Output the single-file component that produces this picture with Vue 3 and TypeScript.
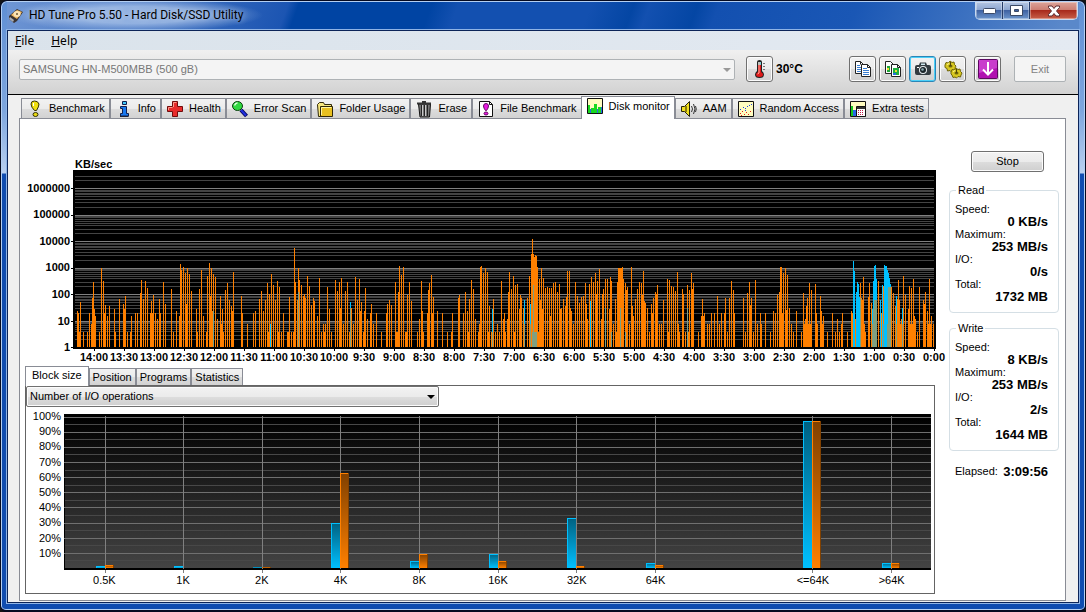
<script setup lang="ts">
import { ref } from 'vue'

interface Segment {
  offset: number
  write: string
  read: string
  both: string
}

interface Bar {
  x: number
  h: number
}

// Samples are "column:height" pairs, relative to the segment's first column.
const segments: Segment[] = [
  {
    offset: -53,
    write:
      '57:36 58:34 59:15 60:45 63:15 67:15 69:34 71:23 72:49 73:65 74:38 75:31 79:15 81:79 83:66 84:34 85:42 87:31 89:41 94:38 95:15 99:48 103:43 104:38 105:51 107:15 110:15 111:31 115:34 117:34 120:54 121:67 123:48 125:66 127:59 130:34 131:46 132:34 133:52 135:34 137:28 139:48 140:34 143:65 145:43 151:58 153:15 156:36 159:31 160:83 161:77 163:80 165:74 166:43 167:79 169:73 171:56 176:38 177:15 179:58 181:77 183:31 186:15 187:71 189:84 190:51 191:79 192:36 193:73 195:70 197:28 200:51 201:23 202:38 203:15 205:57 207:64 209:47 211:41 212:36 213:75 221:51 222:34 227:23 233:34 235:36 239:48 241:56 243:36 245:47 247:64 248:15 249:53 251:73 253:62 255:47 257:66 258:15 259:60 261:15 263:34 267:15 268:15 269:50 271:15 273:15 274:99 275:65 277:47 278:79 279:67 281:62 283:51 284:53 285:49 287:71 289:61 291:42 293:49 294:46 297:31 299:69',
    read: '250:23',
    both: '193:36 278:55',
  },
  {
    offset: 247,
    write:
      '1:15 3:23 4:15 5:23 7:60 9:38 11:15 15:67 17:56 19:65 20:39 21:69 23:23 25:56 27:65 29:15 31:39 33:23 35:70 37:47 39:68 40:36 41:45 43:15 44:36 45:59 47:28 50:34 51:43 53:23 56:34 61:15 66:34 67:43 69:47 71:42 75:65 76:15 77:15 78:55 79:81 81:72 83:80 85:15 86:15 87:52 89:65 91:46 97:15 99:28 101:66 102:36 103:15 107:34 108:57 109:64 111:72 112:34 113:50 117:36 122:34 127:15 131:15 132:34 138:49 139:52 143:34 145:55 147:36 148:15 149:48 151:67 153:58 155:28 158:15 159:23 160:80 161:81 163:74 165:79 167:75 168:15 169:41 171:15 173:48 175:15 177:23 179:15 181:66 183:28 184:34 185:15 187:28 188:55 189:75 191:58 193:71 194:15 195:62 197:63 199:38 200:52 201:49 203:39 207:49 209:71 211:93 212:108 213:93 214:90 215:92 216:91 217:80 218:15 219:68 220:47 221:79 222:38 223:69 225:59 227:60 229:59 230:31 231:59 233:64 235:65 237:55 239:63 240:38 241:39 243:48 245:41 246:50 247:76 249:76 250:39 251:36 253:23 255:65 257:51 259:44 261:50 263:51 265:64 266:43 267:28 269:63 271:70 273:65 275:74 276:53 277:66 279:78 281:28 282:53 283:58 285:68 287:68 289:38 290:70 291:66 293:23 295:48 296:15 297:65 298:79 299:79',
    read: '30:45 172:38 204:47 210:43 270:46',
    both: '30:39 172:15 204:23 210:23 212:15 213:62 214:15 215:15 216:15 285:39 291:15',
  },
  {
    offset: 547,
    write:
      '0:79 1:79 2:80 3:68 5:64 6:57 7:60 9:23 11:80 12:41 13:31 15:48 17:58 19:65 21:64 22:52 23:76 24:46 25:44 27:39 29:15 31:43 32:34 33:49 35:55 36:53 37:62 39:23 41:23 43:47 47:68 48:15 49:67 51:61 53:60 55:56 57:75 58:23 59:15 62:58 63:53 65:15 67:62 68:15 69:57 71:74 72:58 73:64 78:15 81:31 82:48 83:31 84:34 87:23 89:23 91:34 94:34 97:51 99:23 101:34 104:34 105:49 107:15 109:49 111:66 113:57 114:34 123:49 125:15 127:54 129:65 130:42 131:49 133:15 135:67 137:23 140:34 141:23 145:34 150:15 153:36 155:34 157:52 159:55 160:80 161:80 162:34 163:74 165:79 166:37 167:72 169:39 171:23 173:15 176:36 181:15 183:54 184:23 185:28 186:41 187:49 188:23 189:64 190:23 191:57 195:63 196:34 197:23 200:51 201:36 202:23 203:31 207:15 212:34 215:15 217:28 219:15 221:23 222:34 227:15 231:36 232:34 235:28 240:64 241:49 242:47 243:70 244:23 245:15 248:50 249:64 251:44 258:66 261:34 263:61 271:60 273:54 275:41 277:48 278:67 279:47 280:23 281:28 283:71 285:52 288:38 289:61 290:23 291:59 292:23 293:68 294:31 295:28 297:15 299:60 303:47 304:43 305:55 307:36 308:23 309:68 310:23 311:31 313:23',
    read: '233:86 234:76 236:55 237:65 238:63 239:50 252:38 253:66 254:81 255:82 256:68 260:47 262:62 264:82 265:81 266:81 267:77 268:74 269:69 270:63 276:51 282:39',
    both: '0:39 5:15 67:39 240:49 252:23 253:38 254:47 255:47 256:47 263:23 267:23 268:60 269:60 270:60 276:23 282:23',
  },
]

function samples(kind: 'write' | 'read' | 'both'): Bar[] {
  return segments.flatMap((s) =>
    s[kind].split(' ').map((pair) => {
      const [x, h] = pair.split(':').map(Number)
      return { x: x + s.offset, h }
    }),
  )
}

const traces = [
  { name: 'write', bars: samples('write') },
  { name: 'read', bars: samples('read') },
  { name: 'both', bars: samples('both') },
]

const DECADE = 26.5
const logY = (v: number) => Math.round(177.4 - DECADE * Math.log10(v))
const minorLines: number[] = []
for (let d = 0; d < 7; d++) {
  for (let m = 2; m < 10; m++) {
    const y = logY(m * 10 ** d)
    if (y > 5) minorLines.push(y)
  }
}
const majorLines = [1, 2, 3, 4, 5, 6].map((d) => logY(10 ** d))
const speedLabels = ['1000000', '100000', '10000', '1000', '100', '10', '1']
const speedTicks = speedLabels.map((v) => logY(Number(v)))
const timeLabels = Array.from({ length: 29 }, (_, i) => {
  const half = 28 - i
  return `${Math.floor(half / 2)}:${half % 2 ? '30' : '00'}`
})

const percentLabels = [100, 90, 80, 70, 60, 50, 40, 30, 20, 10]
const percentY = (p: number) => Math.round(154 - p * 1.515)
const midLines = percentLabels.map((p) => percentY(p - 5))
const blocks = [
  { label: '0.5K', read: 2, write: 3 },
  { label: '1K', read: 2, write: 0 },
  { label: '2K', read: 1, write: 1 },
  { label: '4K', read: 45, write: 95 },
  { label: '8K', read: 7, write: 14 },
  { label: '16K', read: 14, write: 7 },
  { label: '32K', read: 50, write: 2 },
  { label: '64K', read: 5, write: 3 },
  { label: '', read: 0, write: 0 },
  { label: '<=64K', read: 147, write: 147 },
  { label: '>64K', read: 5, write: 5 },
].map((b, i) => ({ ...b, x: Math.round(40.6 + i * 78.6) }))

const tabs = [
  { id: 'benchmark', label: 'Benchmark' },
  { id: 'info', label: 'Info' },
  { id: 'health', label: 'Health' },
  { id: 'errorscan', label: 'Error Scan' },
  { id: 'folder', label: 'Folder Usage' },
  { id: 'erase', label: 'Erase' },
  { id: 'filebench', label: 'File Benchmark' },
  { id: 'monitor', label: 'Disk monitor' },
  { id: 'aam', label: 'AAM' },
  { id: 'random', label: 'Random Access' },
  { id: 'extra', label: 'Extra tests' },
]
const activeTab = ref('monitor')

const subTabs = ['Block size', 'Position', 'Programs', 'Statistics']
const activeSub = ref('Block size')

const drive = ref('SAMSUNG HN-M500MBB (500 gB)')
const metric = ref('Number of I/O operations')

const stats = [
  { title: 'Read', rows: [['Speed:', '0 KB/s'], ['Maximum:', '253 MB/s'], ['I/O:', '0/s'], ['Total:', '1732 MB']] },
  { title: 'Write', rows: [['Speed:', '8 KB/s'], ['Maximum:', '253 MB/s'], ['I/O:', '2/s'], ['Total:', '1644 MB']] },
]
</script>

<template>
  <div class="window">
    <header class="titlebar">
      <svg class="app-icon" viewBox="0 0 16 16" aria-hidden="true">
        <path d="M1 8 9 1l6 3-6 9-3 2-5-4z" fill="#3b3330" />
        <path d="M3 7 9 2l5 2-5 7z" fill="#f0b860" />
        <ellipse cx="9" cy="6" rx="3.6" ry="3" fill="#fbe3b4" />
        <circle cx="9" cy="6" r="1" fill="#6c5530" />
        <path d="M2 9l4 3-1 2-4-3z" fill="#a8adb4" />
      </svg>
      <h1>HD Tune Pro 5.50 - Hard Disk/SSD Utility</h1>
      <div class="caption">
        <button class="cap" aria-label="Minimize">
          <svg viewBox="0 0 13 6" width="13" height="6"><rect x=".5" y=".5" width="12" height="5" rx="1" fill="#fff" stroke="#3c4a66" /></svg>
        </button>
        <button class="cap" aria-label="Maximize">
          <svg viewBox="0 0 13 11" width="13" height="11"><path d="M.5.5h12v10H.5zM4.500 4.500v2h4v-2z" fill="#fff" fill-rule="evenodd" stroke="#3c4a66" /></svg>
        </button>
        <button class="cap close" aria-label="Close">
          <svg viewBox="0 0 14 12" width="14" height="12"><path d="M1.500 1h3.500l2 2.500L9 1h3.500v1.500L9.500 6l3 3.500V11H9L7 8.500 5 11H1.500V9.500l3-3.500-3-3.500z" fill="#fff" stroke="#5a2a30" /></svg>
        </button>
      </div>
    </header>

    <main class="client">
      <nav class="menubar">
        <button><u>F</u>ile</button>
        <button><u>H</u>elp</button>
      </nav>

      <div class="toolbar">
        <div class="drive">
          <select v-model="drive" aria-label="Drive" disabled>
            <option>SAMSUNG HN-M500MBB (500 gB)</option>
          </select>
        </div>
        <button class="tool" aria-label="Temperature">
          <svg viewBox="0 0 20 20" width="20" height="20">
            <path d="M7 3q0-2 2.500-2T12 3v9q2 1.500 2 3.500 0 3.500-4.500 3.500T5 15.500Q5 13.500 7 12z" fill="#222" />
            <path d="M8 3h3v3H8z" fill="#7ed0d8" />
            <path d="M8 6h3v7q2 1 2 2.500 0 2.500-3.500 2.500T6 15.500Q6 14 8 13z" fill="#e01818" />
            <path d="M9 3v11l-1.500 1" fill="none" stroke="#ffb0a0" />
            <path d="M13 4.500h2M13 7.500h2M13 10.500h2" stroke="#777" />
          </svg>
        </button>
        <output class="temp">30°C</output>
        <div class="tools">
          <button class="tool" aria-label="Copy text">
            <svg viewBox="0 0 20 20" width="20" height="20">
              <path d="M2.500 2.500h5l3 3v9h-8z" fill="#fff" stroke="#222" />
              <path d="M8.500 5.500h6l3 3v9h-9z" fill="#fff" stroke="#222" />
              <path d="M14.500 5.500v3h3M7.500 2.500v3" fill="none" stroke="#222" />
              <path d="M4 6.500h3M4 8.500h4M4 10.500h4M4 12.500h4M10 9.500h4M10 11.500h6M10 13.500h6M10 15.500h6" stroke="#3a7ed0" />
            </svg>
          </button>
          <button class="tool" aria-label="Copy screenshot">
            <svg viewBox="0 0 20 20" width="20" height="20">
              <path d="M2.500 2.500h5l3 3v9h-8z" fill="#fff" stroke="#222" />
              <path d="M4 7h3v6H4z" fill="#20a838" />
              <path d="M8.500 5.500h6l3 3v9h-9z" fill="#fff" stroke="#222" />
              <path d="M14.500 5.500v3h3" fill="none" stroke="#222" />
              <path d="M10 9h6v7h-6z" fill="#20b040" />
              <path d="M4 9h2v2H4zM12 11h2v2h-2z" fill="#f0e030" />
              <path d="M10 14h3v2h-3z" fill="#2870e0" />
            </svg>
          </button>
          <button class="tool focus" aria-label="Save screenshot">
            <svg viewBox="0 0 20 20" width="20" height="20">
              <path d="M2 8q0-2 2-2h2l1-2.500h6L14 6h2q2 0 2 2v6q0 2-2 2H4q-2 0-2-2z" fill="#333b40" />
              <path d="M8 4.500h4V6H8z" fill="#cfe8ee" />
              <circle cx="10" cy="11" r="4" fill="#e8eef0" />
              <circle cx="10" cy="11" r="3" fill="#1a2428" />
              <circle cx="9.500" cy="10.500" r="1.300" fill="#8aa8b0" />
              <path d="M4 8h2v1H4z" fill="#fff" />
            </svg>
          </button>
          <button class="tool" aria-label="Options">
            <svg viewBox="0 0 20 20" width="20" height="20">
              <g stroke="#6e6408" fill="#d8c820">
                <path d="M2 6l1-2.500 2.500.5L7 2l2 1.500 2-.5.5 2.500L13 7l-1 2 .5 2-2.500.5L8.500 13 7 11.500l-2.500.5-.5-2.500L2 8.500z" />
                <path d="M8 13l1-2.500 2.500.5L13 9l2 1.500 2-.5.5 2.500L19 14l-1 2-.5 2-2.500-.5-1.500 1.500-1.500-1-2 .5-1-2.500-1-1z" />
              </g>
              <ellipse cx="7.500" cy="7" rx="2" ry="1.500" fill="#6e6408" />
              <ellipse cx="13.500" cy="14" rx="2" ry="1.500" fill="#6e6408" />
              <path d="M7.500 3v4M13.500 10v4" stroke="#4e4608" />
              <path d="M4 5.500l2-1M10 12.500l2-1" stroke="#fff8a0" />
            </svg>
          </button>
          <button class="tool update" aria-label="Check for updates">
            <svg viewBox="0 0 20 20" width="20" height="20">
              <rect x=".5" y=".5" width="19" height="19" rx="1" fill="#b010b0" stroke="#5c0860" />
              <path d="M1 1h18v8L1 14z" fill="#c93ccc" />
              <path d="M10 3v11M5 10.500l5 5 5-5" fill="none" stroke="#fff" stroke-width="2" />
            </svg>
          </button>
          <button class="exit" disabled>Exit</button>
        </div>
      </div>

      <div class="body">
        <div class="tabs" role="tablist">
          <button
            v-for="t in tabs"
            :key="t.id"
            class="tab"
            :class="{ active: t.id === activeTab }"
            role="tab"
            :aria-selected="t.id === activeTab"
            @click="activeTab = t.id"
          >
            <svg viewBox="0 0 18 18" width="18" height="18" aria-hidden="true">
              <template v-if="t.id === 'benchmark'">
                <path d="M5 4q0-3 3.500-3T13 4q0 2.500-2.500 6.500h-2Q5 7 5 4z" fill="#f0e010" stroke="#333008" />
                <path d="M7.500 3v3" stroke="#fff" />
                <ellipse cx="9.500" cy="14.500" rx="2.500" ry="2" fill="#e8d810" stroke="#333008" />
              </template>
              <template v-else-if="t.id === 'info'">
                <path d="M5 15.500h8.500v1.500H5z" fill="#222" />
                <path d="M7.500 1.500h4v3h-4z" fill="#40c8f8" stroke="#102050" />
                <path d="M5.500 6.500h6v7h2v2.500h-8v-2.500h2v-5h-2z" fill="#1878f0" stroke="#102050" />
              </template>
              <template v-else-if="t.id === 'health'">
                <path d="M6.500 1.500h5v5h5v5h-5v5h-5v-5h-5v-5h5z" fill="#e82c2c" stroke="#700c0c" />
                <path d="M7.500 7V2.500h3M2.500 10V7.500h4" fill="none" stroke="#ff9a8a" />
              </template>
              <template v-else-if="t.id === 'errorscan'">
                <path d="M10 10l5.500 6" stroke="#050560" stroke-width="4" />
                <path d="M10 10l5 5.500" stroke="#2030e0" stroke-width="2" />
                <ellipse cx="6.500" cy="6" rx="5" ry="4.500" fill="#30d840" stroke="#0c4010" />
                <path d="M3.500 5.500q1-2.500 3-2.500" fill="none" stroke="#d8ffd8" stroke-width="1.500" />
              </template>
              <template v-else-if="t.id === 'folder'">
                <path d="M1.500 4.500l2-2h4l1 2h7v12h-13z" fill="#f8e880" stroke="#302808" />
                <path d="M4.500 6.500h12v10h-12z" fill="#e8c020" stroke="#302808" />
                <path d="M5.500 15V7.500h10" fill="none" stroke="#fff4a0" />
              </template>
              <template v-else-if="t.id === 'erase'">
                <path d="M3.500 4h12l-1 13h-9.500z" fill="#777" stroke="#111" />
                <path d="M6.500 5v11M9.500 5v11M12.500 5v11" stroke="#222" />
                <path d="M7.500 5v11M10.500 5v11" stroke="#c8c8c8" />
                <path d="M2 2.500h14v2H2zM7 1h4v2H7z" fill="#333" />
              </template>
              <template v-else-if="t.id === 'filebench'">
                <path d="M2.500 1.500h10l3 3v12h-13z" fill="#fff" stroke="#111" />
                <path d="M12.500 1.500v3h3" fill="none" stroke="#111" />
                <path d="M6.500 6q0-2.500 2.500-2.500T11.500 6Q11.500 8 9.500 10.500h-1Q6.500 8 6.500 6z" fill="#e818e0" stroke="#600860" />
                <ellipse cx="9" cy="13.500" rx="2" ry="1.500" fill="#e818e0" stroke="#600860" />
              </template>
              <template v-else-if="t.id === 'monitor'">
                <path d="M1.500 1.500h15v15h-15z" fill="#fffcc0" stroke="#111" />
                <path d="M2 8h2v8H2zM5 11h3v5H5zM8 7h3v9H8zM12 10h3v6h-3z" fill="#18d820" />
                <path d="M4 12h1v4H4zM11 12h1v4h-1zM15 10h1v6h-1z" fill="#2868e8" />
              </template>
              <template v-else-if="t.id === 'aam'">
                <path d="M1.500 6.500h3l5-5v15l-5-5h-3z" fill="#f0e020" stroke="#222008" />
                <path d="M6 6v6" stroke="#887a10" stroke-width="2" />
                <path d="M11.500 6q2 3 0 6M13.500 4q3 5 0 10M15.500 6q1.500 3 0 6" fill="none" stroke="#333" />
              </template>
              <template v-else-if="t.id === 'random'">
                <path d="M1.500 1.500h15v15h-15z" fill="#fffcc0" stroke="#111" />
                <path d="M3 13h1v1H3zM5 11h1v1H5zM7 14h1v1H7zM9 12h1v1H9zM11 14h1v1h-1zM13 11h1v1h-1zM4 15h1v1H4z" fill="#e02020" />
                <path d="M3 9h1v1H3zM6 7h1v1H6zM8 8h1v1H8zM10 6h1v1h-1zM12 5h1v1h-1zM14 4h1v1h-1zM8 10h1v1H8z" fill="#2040e0" />
              </template>
              <template v-else>
                <path d="M1.500 1.500h15v15h-15z" fill="#fffcc0" stroke="#111" />
                <path d="M2 6h2v10H2z" fill="#18c820" />
                <path d="M4 10h3v6H4z" fill="#2868e8" />
                <path d="M7.500 6.500h9v10h-9z" fill="#fff" stroke="#111" />
                <path d="M8 7h8v2H8z" fill="#333" />
                <path d="M9 10h1v1H9zM11 10h1v1h-1zM13 10h1v1h-1zM9 12h1v1H9zM11 12h1v1h-1zM13 12h1v1h-1zM9 14h1v1H9zM11 14h1v1h-1zM13 14h1v1h-1z" fill="#c02050" />
              </template>
            </svg>
            {{ t.label }}
          </button>
        </div>

        <div class="page">
          <section class="charts">
            <div class="speed">
              <div class="unit">KB/sec</div>
              <div class="speed-axis">
                <span v-for="v in speedLabels" :key="v">{{ v }}</span>
              </div>
              <svg class="plot" viewBox="0 0 863 179" preserveAspectRatio="none" role="img" aria-label="Transfer speed over time">
                <rect width="863" height="179" fill="#000" />
                <rect v-for="y in minorLines" :key="'n' + y" x="2" :y="y" width="859" height="1" fill="#444" />
                <rect v-for="y in majorLines" :key="'m' + y" x="2" :y="y" width="859" height="1" fill="#808080" />
                <rect v-for="y in speedTicks" :key="'t' + y" x="-2" :y="y" width="2" height="1" fill="#000" />
                <rect v-for="(l, i) in timeLabels" :key="l" :x="21 + i * 30" y="179" width="1" height="2" fill="#000" />
                <g v-for="tr in traces" :key="tr.name" :class="tr.name">
                  <rect v-for="(b, i) in tr.bars" :key="i" :x="b.x" :y="177 - b.h" width="1" :height="b.h" />
                </g>
              </svg>
              <div class="times">
                <span v-for="t in timeLabels" :key="t">{{ t }}</span>
              </div>
            </div>

            <div class="subtabs" role="tablist">
              <button
                v-for="s in subTabs"
                :key="s"
                class="tab"
                :class="{ active: s === activeSub }"
                role="tab"
                :aria-selected="s === activeSub"
                @click="activeSub = s"
              >
                {{ s }}
              </button>
            </div>

            <div class="breakdown">
              <div class="metric">
                <select v-model="metric" aria-label="Metric">
                  <option>Number of I/O operations</option>
                </select>
              </div>
              <div class="histogram">
                <div class="percent-axis">
                  <span v-for="p in percentLabels" :key="p">{{ p }}%</span>
                </div>
                <svg class="plot" viewBox="0 0 867 156" preserveAspectRatio="none" role="img" aria-label="I/O operations by block size">
                  <defs>
                    <linearGradient id="shade" x1="0" y1="0" x2="0" y2="1">
                      <stop offset="0" stop-color="#000" />
                      <stop offset="1" stop-color="#444" />
                    </linearGradient>
                    <linearGradient id="blue" x1="0" y1="0" x2="0" y2="1">
                      <stop offset="0" stop-color="#006080" />
                      <stop offset="1" stop-color="#00c0ff" />
                    </linearGradient>
                    <linearGradient id="orange" x1="0" y1="0" x2="0" y2="1">
                      <stop offset="0" stop-color="#804000" />
                      <stop offset="1" stop-color="#ff8000" />
                    </linearGradient>
                  </defs>
                  <rect width="867" height="156" fill="#000" />
                  <rect x="1" y="3" width="866" height="151" fill="url(#shade)" />
                  <rect v-for="y in midLines" :key="'h' + y" x="1" :y="y" width="866" height="1" fill="#484848" />
                  <rect v-for="p in percentLabels" :key="p" x="0" :y="percentY(p)" width="867" height="1" fill="#707070" />
                  <g v-for="b in blocks" :key="b.x">
                    <template v-if="b.label">
                      <rect :x="b.x" y="2" width="1" height="157" fill="#808080" />
                      <rect x="0" y="155" width="867" height="1" fill="#000" />
                      <template v-if="b.read">
                        <rect :x="b.x - 9" :y="154 - b.read" width="9" :height="b.read" fill="url(#blue)" />
                        <path v-if="b.read > 1" :d="`M${b.x - 9} 154V${154 - b.read}h9v1h-8V154z`" fill="#00c0ff" />
                      </template>
                      <template v-if="b.write">
                        <rect :x="b.x" :y="154 - b.write" width="9" :height="b.write" fill="url(#orange)" />
                        <path v-if="b.write > 1" :d="`M${b.x} 154V${154 - b.write}h8v1h-7V154z`" fill="#ff8000" />
                        <rect :x="b.x + 8" :y="154 - b.write" width="1" :height="b.write" fill="#804000" />
                      </template>
                    </template>
                  </g>
                </svg>
                <div class="sizes">
                  <span v-for="b in blocks" :key="b.x">{{ b.label }}</span>
                </div>
              </div>
            </div>
          </section>

          <aside class="panel">
            <button class="stop">Stop</button>
            <fieldset v-for="s in stats" :key="s.title">
              <legend>{{ s.title }}</legend>
              <dl>
                <template v-for="[k, v] in s.rows" :key="k">
                  <dt>{{ k }}</dt>
                  <dd>{{ v }}</dd>
                </template>
              </dl>
            </fieldset>
            <div class="elapsed"><span>Elapsed:</span><strong>3:09:56</strong></div>
          </aside>
        </div>
      </div>
    </main>
  </div>
</template>

<style>
body {
  background: #141414;
}
</style>

<style scoped>
* {
  box-sizing: border-box;
}
.window {
  display: flex;
  flex-direction: column;
  min-height: 100vh;
  padding: 0 6px 7px;
  border: 1px solid #050a20;
  border-bottom-width: 2px;
  border-radius: 7px 7px 6px 6px;
  box-shadow: inset 0 0 0 1px #b4cff2;
  background:
    linear-gradient(180deg, #5f8fd4 0, #7ea6de 110px, #b9d0f0 172px, transparent 173px) left / 8px 100% no-repeat,
    linear-gradient(180deg, #5f8fd4 0, #7ea6de 110px, #b9d0f0 172px, transparent 173px) right / 8px 100% no-repeat,
    #0f4cb0;
  font: 11px/13px "Liberation Sans", Arial, sans-serif;
  color: #000;
}
button,
select {
  font: inherit;
  color: inherit;
  margin: 0;
}
.titlebar {
  display: flex;
  height: 28px;
  padding-left: 1px;
  margin-top: 1px;
  background:
    radial-gradient(ellipse 128px 17px at 128px 13px, rgba(170, 196, 234, 0.75) 50%, transparent 100%),
    linear-gradient(110deg, #6f96d4 0, #1c55b2 265px, #0044a3 275px, #0044a3 400px, #1350b0 425px, #1350b0 550px, #0446a4 590px, #1350b0 605px, #0446a4 650px, #1350b0 670px, #1a57b5 800px, #5a88ca 1000px);
}
.app-icon {
  width: 16px;
  height: 16px;
  margin-top: 6px;
}
h1 {
  flex: 1;
  margin: 0 0 0 5px;
  font: 12px/26px Roboto, "Open Sans", sans-serif;
  text-shadow: 0 0 6px rgba(255, 255, 255, 0.6);
}
.caption {
  display: flex;
  height: 18px;
  margin-right: 1px;
  border: 1px solid #c8daf0;
  border-top: 0;
  border-radius: 0 0 5px 5px;
  overflow: hidden;
}
.cap {
  display: flex;
  align-items: center;
  justify-content: center;
  width: 27px;
  padding: 0;
  border: 0;
  border-right: 1px solid #253c68;
  box-shadow: inset 0 0 0 1px rgba(255, 255, 255, 0.35);
  background: linear-gradient(#b4c6e2 0, #8ba5d0 48%, #3f62a2 50%, #6c95cc 100%);
}
.close {
  width: 47px;
  border-right: 0;
  background: linear-gradient(#dca49a 0, #cc7c70 48%, #a82a1c 50%, #c8604a 100%);
}
.client {
  flex: 1;
  display: flex;
  flex-direction: column;
  border: 1px solid #0c2458;
  box-shadow: 0 0 0 1px #8fb4e6;
  background: #f0f0f0;
}
.menubar {
  display: flex;
  gap: 15px;
  height: 19px;
  padding: 0 6px;
  background: linear-gradient(90deg, #dae3eb, #e4eaf2);
}
.menubar button {
  padding: 0 1px;
  border: 0;
  background: none;
  font: 12px/19px "Noto Sans", "Open Sans", sans-serif;
}
.toolbar {
  display: flex;
  align-items: center;
  height: 45px;
  padding: 0 12px 6px 11px;
  border-bottom: 1px solid #000;
  background: linear-gradient(#f0f0f0, #d2d2d2);
}
.drive {
  position: relative;
  flex: 1;
  margin-right: 11px;
}
select {
  display: block;
  width: 100%;
  height: 21px;
  padding: 0 3px;
  appearance: none;
  border: 1px solid #aeb2b5;
  border-radius: 2px;
  background: #f4f4f4;
  color: #777;
  opacity: 1;
}
.drive::after,
.metric::after {
  content: "";
  position: absolute;
  right: 4px;
  top: 9px;
  border: 4px solid transparent;
  border-top-color: #999;
  border-bottom: 0;
}
.tool {
  display: flex;
  align-items: center;
  justify-content: center;
  width: 27px;
  height: 26px;
  padding: 0;
  border: 1px solid #707070;
  border-radius: 3px;
  box-shadow: inset 0 0 0 1px #fcfcfc;
  background: linear-gradient(#f2f2f2 0, #ebebeb 50%, #dddddd 51%, #cfcfcf 100%);
}
.focus {
  border-color: #2a86b8;
  box-shadow: inset 0 0 0 1px #4cd0f8;
}
.temp {
  width: 73px;
  margin-left: 3px;
  font-size: 12px;
  font-weight: bold;
}
.tools {
  display: flex;
  gap: 3px;
}
.update {
  margin-left: 5px;
}
.exit {
  width: 52px;
  margin-left: 10px;
  border: 1px solid #adb2b5;
  border-radius: 2px;
  background: #f4f4f4;
  color: #838383;
}
.body {
  flex: 1;
  display: flex;
  flex-direction: column;
  padding: 0 12px 1px 11px;
}
.tabs {
  display: flex;
  align-items: flex-end;
  height: 23px;
  padding-left: 2px;
}
.tab {
  display: flex;
  align-items: center;
  gap: 5px;
  height: 20px;
  padding: 0 4px;
  border: 1px solid #898c95;
  border-bottom: 0;
  background: linear-gradient(#f2f2f2 0, #ebebeb 50%, #dddddd 51%, #d2d2d2 100%);
  white-space: nowrap;
}
.tab.active {
  height: 23px;
  padding-bottom: 4px;
  margin: 0 0 -1px -1px;
  background: #fff;
  z-index: 1;
}
.page {
  flex: 1;
  display: flex;
  border: 1px solid #898c95;
  background: #fff;
}
.charts {
  flex: 1;
  display: flex;
  flex-direction: column;
  padding-top: 39px;
}
.speed {
  display: grid;
  grid-template-columns: 53px 1fr;
  grid-template-rows: 12px 179px 18px;
  padding-right: 13px;
  font-weight: bold;
}
.unit {
  grid-column: 2;
  line-height: 13px;
  padding-left: 2px;
}
.speed-axis {
  grid-column: 1;
  display: grid;
  grid-template-rows: repeat(7, 1fr);
  align-items: center;
  margin: 5px 3px -12px 0;
  text-align: right;
}
.plot {
  display: block;
  width: 100%;
  height: 100%;
  overflow: visible;
  shape-rendering: crispEdges;
}
.times {
  grid-column: 2;
  display: grid;
  grid-template-columns: repeat(29, 1fr);
  margin: 2px -13px 0 6px;
  text-align: center;
}
.write rect {
  fill: #ff8000;
}
.read rect {
  fill: #00c0ff;
}
.both rect {
  fill: #80a080;
}
.subtabs {
  display: flex;
  align-items: flex-end;
  height: 18px;
  padding-left: 5px;
}
.subtabs .tab {
  height: 17px;
  padding: 0 3px;
}
.subtabs .active {
  height: 20px;
  margin-left: 0;
  padding: 0 6px 2px;
}
.breakdown {
  flex: 1;
  margin: 0 14px 6px 5px;
  border: 1px solid #646464;
}
.metric {
  position: relative;
  width: 413px;
}
.metric select {
  border-color: #707070;
  box-shadow: inset 0 0 0 1px #fcfcfc;
  background: linear-gradient(#f2f2f2 0, #ebebeb 50%, #dddddd 51%, #cfcfcf 100%);
  color: #000;
}
.metric::after {
  border-top-color: #000;
}
.histogram {
  display: grid;
  grid-template-columns: 38px 1fr;
  grid-template-rows: 156px 18px;
  padding: 7px 3px 0 0;
}
.percent-axis {
  display: grid;
  grid-template-rows: repeat(10, 1fr);
  align-items: center;
  margin: -5px 3px 9px 0;
  text-align: right;
}
.sizes {
  grid-column: 2;
  display: grid;
  grid-template-columns: repeat(11, 1fr);
  margin-left: 1px;
  padding-top: 4px;
  text-align: center;
}
.panel {
  width: 116px;
  padding: 32px 6px 0 0;
}
.stop {
  display: block;
  width: 73px;
  height: 21px;
  margin: 0 0 12px 22px;
  padding: 0;
  border: 1px solid #707070;
  border-radius: 3px;
  box-shadow: inset 0 0 0 1px #fcfcfc;
  background: linear-gradient(#f2f2f2 0, #ebebeb 50%, #dddddd 51%, #cfcfcf 100%);
}
fieldset {
  min-width: 0;
  height: 129px;
  margin: 0 0 9px;
  padding: 6px 10px 0 5px;
  border: 1px solid #d5dfe5;
  border-radius: 4px;
}
legend {
  margin-left: 1px;
  padding: 0 2px;
}
dl {
  margin: 0;
}
dt {
  line-height: 12px;
}
dd {
  margin: 0;
  font-size: 13px;
  font-weight: bold;
  line-height: 13px;
  text-align: right;
}
.elapsed {
  display: flex;
  justify-content: space-between;
  align-items: center;
  padding: 5px 11px 0 6px;
}
.elapsed strong {
  font-size: 13px;
}
</style>
